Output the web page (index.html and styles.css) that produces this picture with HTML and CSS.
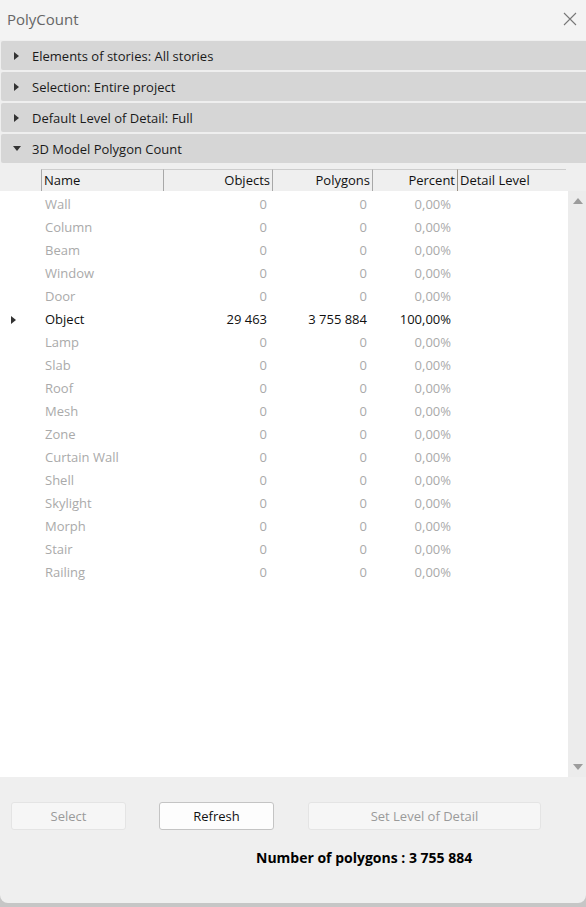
FILE: index.html
```html
<!DOCTYPE html>
<html lang="en">
<head>
  <meta charset="UTF-8" />
  <meta name="viewport" content="width=device-width, initial-scale=1.0"/>
  <title>PolyCount</title>
  <link rel="stylesheet" href="styles.css">
</head>
<body>
  <div class="window">
    <div class="titlebar">
      <span class="title">PolyCount</span>
      <svg class="close" width="14" height="14" viewBox="0 0 14 14">
        <path d="M1 1 L13 13 M13 1 L1 13" stroke="#777" stroke-width="1.1" fill="none"/>
      </svg>
    </div>

    <div class="section"><span class="tri right"></span>Elements of stories: All stories</div>
    <div class="section"><span class="tri right"></span>Selection: Entire project</div>
    <div class="section"><span class="tri right"></span>Default Level of Detail: Full</div>
    <div class="section"><span class="tri down"></span>3D Model Polygon Count</div>

    <div class="grid">
      <div class="grid-head">
        <div class="hcell spacer"></div>
        <div class="hcell">Name</div>
        <div class="hcell num">Objects</div>
        <div class="hcell num">Polygons</div>
        <div class="hcell num">Percent</div>
        <div class="hcell detail">Detail Level</div>
      </div>
      <div class="grid-body">
        <div class="rows" id="rows"></div>
        <div class="scrollbar">
          <span class="arrow up"></span>
          <span class="arrow down"></span>
        </div>
      </div>
    </div>

    <div class="actions">
      <button class="btn" disabled>Select</button>
      <button class="btn primary">Refresh</button>
      <button class="btn wide" disabled>Set Level of Detail</button>
    </div>
    <div class="total">Number of polygons : 3 755 884</div>
  </div>

  <script>
    const items = [
      ['Wall', '0', '0', '0,00%'],
      ['Column', '0', '0', '0,00%'],
      ['Beam', '0', '0', '0,00%'],
      ['Window', '0', '0', '0,00%'],
      ['Door', '0', '0', '0,00%'],
      ['Object', '29 463', '3 755 884', '100,00%', true],
      ['Lamp', '0', '0', '0,00%'],
      ['Slab', '0', '0', '0,00%'],
      ['Roof', '0', '0', '0,00%'],
      ['Mesh', '0', '0', '0,00%'],
      ['Zone', '0', '0', '0,00%'],
      ['Curtain Wall', '0', '0', '0,00%'],
      ['Shell', '0', '0', '0,00%'],
      ['Skylight', '0', '0', '0,00%'],
      ['Morph', '0', '0', '0,00%'],
      ['Stair', '0', '0', '0,00%'],
      ['Railing', '0', '0', '0,00%']
    ];

    const rows = document.getElementById('rows');
    items.forEach(function (it) {
      const row = document.createElement('div');
      row.className = 'row' + (it[4] ? ' active' : '');
      row.innerHTML =
        '<div class="cell">' + (it[4] ? '<span class="tri right"></span>' : '') + '</div>' +
        '<div class="cell name">' + it[0] + '</div>' +
        '<div class="cell num">' + it[1] + '</div>' +
        '<div class="cell num">' + it[2] + '</div>' +
        '<div class="cell num pct">' + it[3] + '</div>' +
        '<div class="cell"></div>';
      rows.appendChild(row);
    });
  </script>
</body>
</html>
```

FILE: styles.css
```css
html {
  background: #c6c6c6;
}
body {
  margin: 0;
  font-family: 'Open Sans', 'Noto Sans', sans-serif;
  font-size: 13px;
  color: #111;
}
.window {
  height: 903px;
  background: #efefef;
  border-radius: 0 0 8px 8px;
  overflow: hidden;
}
.titlebar {
  height: 40px;
  background: #f3f3f3;
  display: flex;
  align-items: center;
  justify-content: space-between;
  padding: 0 9px 2px 7px;
  box-sizing: border-box;
  margin-bottom: 1px;
}
.title {
  font-size: 15px;
  color: #666;
}
.section {
  height: 29px;
  margin: 0 0 2px 1px;
  background: #d6d6d6;
  border-radius: 2px 0 0 2px;
  display: flex;
  align-items: center;
  padding-left: 13px;
  font-size: 13px;
  color: #1a1a1a;
}
.section:last-of-type {
  margin-bottom: 0;
}
.tri {
  display: inline-block;
  width: 0;
  height: 0;
  border-style: solid;
}
.tri.right {
  border-width: 4px 0 4px 5px;
  border-color: transparent transparent transparent #333;
  margin-right: 13px;
}
.tri.down {
  border-width: 5px 4px 0 4px;
  border-color: #333 transparent transparent transparent;
  margin-right: 11px;
  margin-left: -1px;
}
.grid {
  margin-top: 6px;
}
.grid-head,
.row {
  display: grid;
  grid-template-columns: 41px 122px 109px 100px 85px 109px;
}
.grid-head {
  height: 22px;
}
.hcell {
  border-top: 1px solid #cdcdcd;
  border-left: 1px solid #a8a8a8;
  padding: 0 2px;
  line-height: 20px;
  font-size: 13px;
  color: #111;
  white-space: nowrap;
}
.hcell.spacer {
  border: none;
}
.hcell.num {
  text-align: right;
}
.hcell.detail {
  border-left-color: #9a8f80;
}
.grid-body {
  display: flex;
  height: 586px;
}
.rows {
  width: 568px;
  background: #fff;
  padding-top: 1px;
}
.row {
  height: 23px;
  align-items: center;
  color: #aaa;
  font-size: 13px;
}
.row.active {
  color: #111;
}
.row .cell {
  white-space: nowrap;
}
.row .cell:first-child {
  padding-left: 11px;
}
.row .name {
  padding-left: 4px;
}
.row .num {
  text-align: right;
  padding-right: 5px;
}
.row .pct {
  padding-right: 6px;
}
.scrollbar {
  flex: 1;
  background: #ececec;
  position: relative;
}
.arrow {
  position: absolute;
  left: 5px;
  width: 0;
  height: 0;
  border-style: solid;
}
.arrow.up {
  top: 7px;
  border-width: 0 5px 6px 5px;
  border-color: transparent transparent #9c9c9c transparent;
}
.arrow.down {
  bottom: 7px;
  border-width: 6px 5px 0 5px;
  border-color: #9c9c9c transparent transparent transparent;
}
.actions {
  display: flex;
  padding: 25px 0 0 11px;
}
.btn {
  height: 28px;
  width: 115px;
  font-family: inherit;
  font-size: 13px;
  border: 1px solid #e4e4e4;
  border-radius: 3px;
  background: #f6f6f6;
  color: #9a9a9a;
  padding: 0;
}
.btn.primary {
  margin-left: 33px;
  background: #fdfdfd;
  border-color: #c4c4c4;
  color: #111;
}
.btn.wide {
  margin-left: 34px;
  width: 233px;
}
.total {
  margin: 18px 0 0 256px;
  font-weight: bold;
  font-size: 14px;
  color: #000;
}
```
